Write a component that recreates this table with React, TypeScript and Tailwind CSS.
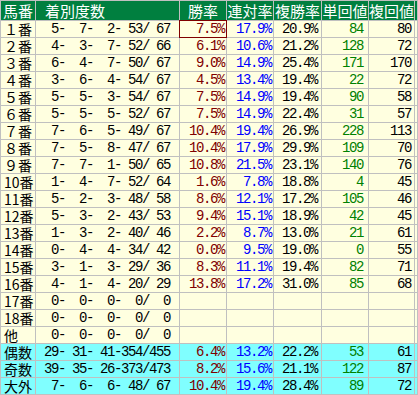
import React from 'react';

type Row = {
  label: string;
  counts: number[];
  win?: string;
  place?: string;
  show?: string;
  tan?: number;
  fuku?: number;
  summary?: boolean;
};

const rows: Row[] = [
  { label: '１番', counts: [5, 7, 2, 53, 67], win: '7.5', place: '17.9', show: '20.9', tan: 84, fuku: 80 },
  { label: '２番', counts: [4, 3, 7, 52, 66], win: '6.1', place: '10.6', show: '21.2', tan: 128, fuku: 72 },
  { label: '３番', counts: [6, 4, 7, 50, 67], win: '9.0', place: '14.9', show: '25.4', tan: 171, fuku: 170 },
  { label: '４番', counts: [3, 6, 4, 54, 67], win: '4.5', place: '13.4', show: '19.4', tan: 22, fuku: 72 },
  { label: '５番', counts: [5, 5, 3, 54, 67], win: '7.5', place: '14.9', show: '19.4', tan: 90, fuku: 58 },
  { label: '６番', counts: [5, 5, 5, 52, 67], win: '7.5', place: '14.9', show: '22.4', tan: 31, fuku: 57 },
  { label: '７番', counts: [7, 6, 5, 49, 67], win: '10.4', place: '19.4', show: '26.9', tan: 228, fuku: 113 },
  { label: '８番', counts: [7, 5, 8, 47, 67], win: '10.4', place: '17.9', show: '29.9', tan: 109, fuku: 70 },
  { label: '９番', counts: [7, 7, 1, 50, 65], win: '10.8', place: '21.5', show: '23.1', tan: 140, fuku: 76 },
  { label: '10番', counts: [1, 4, 7, 52, 64], win: '1.6', place: '7.8', show: '18.8', tan: 4, fuku: 45 },
  { label: '11番', counts: [5, 2, 3, 48, 58], win: '8.6', place: '12.1', show: '17.2', tan: 105, fuku: 46 },
  { label: '12番', counts: [5, 3, 2, 43, 53], win: '9.4', place: '15.1', show: '18.9', tan: 42, fuku: 45 },
  { label: '13番', counts: [1, 3, 2, 40, 46], win: '2.2', place: '8.7', show: '13.0', tan: 21, fuku: 61 },
  { label: '14番', counts: [0, 4, 4, 34, 42], win: '0.0', place: '9.5', show: '19.0', tan: 0, fuku: 55 },
  { label: '15番', counts: [3, 1, 3, 29, 36], win: '8.3', place: '11.1', show: '19.4', tan: 82, fuku: 71 },
  { label: '16番', counts: [4, 1, 4, 20, 29], win: '13.8', place: '17.2', show: '31.0', tan: 85, fuku: 68 },
  { label: '17番', counts: [0, 0, 0, 0, 0] },
  { label: '18番', counts: [0, 0, 0, 0, 0] },
  { label: '他', counts: [0, 0, 0, 0, 0] },
  { label: '偶数', counts: [29, 31, 41, 354, 455], win: '6.4', place: '13.2', show: '22.2', tan: 53, fuku: 61, summary: true },
  { label: '奇数', counts: [39, 35, 26, 373, 473], win: '8.2', place: '15.6', show: '21.1', tan: 122, fuku: 87, summary: true },
  { label: '大外', counts: [7, 6, 6, 48, 67], win: '10.4', place: '19.4', show: '28.4', tan: 89, fuku: 72, summary: true },
];

const pad = (n: number) => String(n).padStart(3, ' ');
const fmtCounts = (c: number[]) => `${pad(c[0])}-${pad(c[1])}-${pad(c[2])}-${pad(c[3])}/${pad(c[4])}`;

const mono = "font-['Liberation_Mono','Noto_Sans_CJK_JP',monospace] text-[14px] tracking-[-1.4px] whitespace-pre leading-[16px]";
const jp = "font-['Noto_Sans_CJK_JP',sans-serif]";

export default function App() {
  return (
    <div className="w-[418px] h-[395px] bg-white">
      <div className="grid grid-cols-[34px_143px_46px_46px_47px_46px_45px_2px] gap-px bg-[#c0c0c0] p-px w-[418px]">
        <div className={`h-[19px] bg-[#007f3f] text-white text-[15px] leading-[19px] pl-[2px] ${jp}`}>馬番</div>
        <div className={`h-[19px] bg-[#007f3f] text-white text-[15px] leading-[19px] pl-[9px] ${jp}`}>着別度数</div>
        <div className={`h-[19px] bg-[#007f3f] text-white text-[15px] leading-[19px] text-center ${jp}`}>勝率</div>
        <div className={`h-[19px] bg-[#007f3f] text-white text-[15px] leading-[19px] text-center ${jp}`}>連対率</div>
        <div className={`h-[19px] bg-[#007f3f] text-white text-[15px] leading-[19px] text-center ${jp}`}>複勝率</div>
        <div className={`h-[19px] bg-[#007f3f] text-white text-[15px] leading-[19px] text-center ${jp}`}>単回値</div>
        <div className={`h-[19px] bg-[#007f3f] text-white text-[15px] leading-[19px] text-center ${jp}`}>複回値</div>
        <div className="h-[19px] bg-[#007f3f]" />
        {rows.map((r, i) => {
          const bg = r.summary ? 'bg-[#80ffff]' : 'bg-[#ffffe0]';
          return (
            <React.Fragment key={i}>
              <div className={`h-[16px] ${bg} text-black text-[14px] leading-[16px] pl-[3px] ${jp}`}>{r.label}</div>
              <div className={`h-[16px] ${bg} text-black text-right pr-[9px] ${mono}`}>{fmtCounts(r.counts)}</div>
              <div className={`h-[16px] ${bg} text-[#800000] text-right pr-[2px] ${mono} ${i === 0 ? 'relative z-10 outline outline-1 outline-[#800000]' : ''}`}>{r.win ? `${r.win}%` : ''}</div>
              <div className={`h-[16px] ${bg} text-[#0000ff] text-right pr-[2px] ${mono}`}>{r.place ? `${r.place}%` : ''}</div>
              <div className={`h-[16px] ${bg} text-black text-right pr-[4px] ${mono}`}>{r.show ? `${r.show}%` : ''}</div>
              <div className={`h-[16px] ${bg} text-[#008000] text-right pr-[5px] ${mono}`}>{r.tan !== undefined ? r.tan : ''}</div>
              <div className={`h-[16px] ${bg} text-black text-right pr-[3px] ${mono}`}>{r.fuku !== undefined ? r.fuku : ''}</div>
              <div className={`h-[16px] ${bg}`} />
            </React.Fragment>
          );
        })}
      </div>
    </div>
  );
}
